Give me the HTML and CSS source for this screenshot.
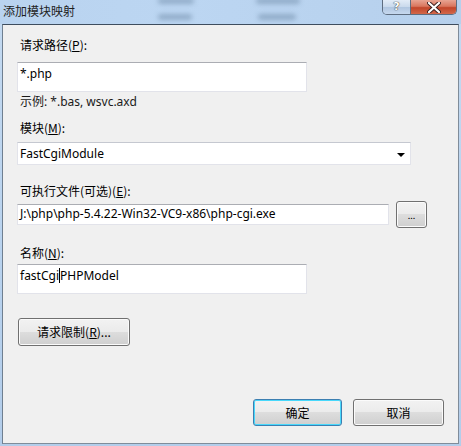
FILE: index.html
```html
<!DOCTYPE html>
<html lang="zh-CN">
<head>
  <meta charset="UTF-8" />
  <title>添加模块映射</title>
  <link rel="stylesheet" href="styles.css">
</head>
<body>
  <div class="window">
    <div class="titlebar">
      <span class="blob b1"></span>
      <span class="blob b2"></span>
      <span class="blob b3"></span>
      <span class="blob b4"></span>
      <span class="title">添加模块映射</span>
      <div class="caption-buttons">
        <span class="cap-help">?</span>
        <span class="cap-close">
          <svg width="14" height="11" viewBox="0 0 14 11">
            <path d="M2 1 L12 10 M12 1 L2 10" stroke="#3a2020" stroke-width="4" stroke-linecap="round"/>
            <path d="M2 1 L12 10 M12 1 L2 10" stroke="#ffffff" stroke-width="2.2" stroke-linecap="round"/>
          </svg>
        </span>
      </div>
    </div>

    <div class="client">
      <label class="field-label path-label">请求路径(<u>P</u>):</label>
      <div class="textbox tall w-short first-box">*.php</div>
      <div class="hint">示例: *.bas, wsvc.axd</div>

      <label class="field-label module-label">模块(<u>M</u>):</label>
      <div class="combo">
        <span>FastCgiModule</span>
        <span class="arrow"></span>
      </div>

      <label class="field-label exe-label">可执行文件(可选)(<u>E</u>):</label>
      <div class="path-row">
        <div class="textbox path">J:\php\php-5.4.22-Win32-VC9-x86\php-cgi.exe</div>
        <button class="btn browse">...</button>
      </div>

      <label class="field-label name-label">名称(<u>N</u>):</label>
      <div class="textbox tall w-short name-box">fastCgi<span class="caret"></span>PHPModel</div>

      <button class="btn restrict">请求限制(<u>R</u>)...</button>

      <div class="dialog-buttons">
        <button class="btn default">确定</button>
        <button class="btn cancel">取消</button>
      </div>
    </div>
  </div>
</body>
</html>
```

FILE: styles.css
```css
* {
  margin: 0;
  padding: 0;
  box-sizing: border-box;
}

body {
  font-family: "Noto Sans", "Noto Sans CJK SC", sans-serif;
  font-size: 12px;
  color: #000;
  background: #fff;
}

.window {
  width: 461px;
  height: 446px;
  background: linear-gradient(180deg, #c4daf1 0%, #b8d2ee 60%, #b3cdea 100%);
  display: flex;
  flex-direction: column;
  overflow: hidden;
}

/* title bar */
.titlebar {
  position: relative;
  height: 24px;
  display: flex;
  align-items: flex-start;
  background: linear-gradient(90deg, #b9d3ef 0%, #bcd6f2 40%, #b6d0ec 100%);
}

.blob {
  position: absolute;
  height: 6px;
  border-radius: 3px;
  background: #6d89a6;
  filter: blur(2.5px);
  opacity: 0.55;
}
.b1 { left: 158px; top: -2px; width: 36px; }
.b2 { left: 158px; top: 14px; width: 34px; }
.b3 { left: 256px; top: -2px; width: 44px; }
.b4 { left: 258px; top: 14px; width: 38px; }

.title {
  position: relative;
  margin: 3px 0 0 3px;
  font-family: "Noto Sans CJK SC", sans-serif;
  font-size: 12px;
  line-height: 16px;
  color: #1e1e1e;
}

.caption-buttons {
  position: relative;
  margin-left: auto;
  margin-right: 4px;
  display: flex;
  height: 15px;
  border: 1px solid #5e6d80;
  border-top: none;
  border-radius: 0 0 5px 5px;
  overflow: hidden;
}

.cap-help {
  width: 28px;
  height: 14px;
  background: linear-gradient(180deg, #e2ecf7 0%, #c9d9ec 50%, #b0c6e0 51%, #c6d8ee 100%);
  border-right: 1px solid #5e6d80;
  color: #fff;
  font-family: "DejaVu Sans", sans-serif;
  font-weight: bold;
  font-size: 11px;
  line-height: 14px;
  text-align: center;
  text-shadow: 0 0 1px #333, 0 0 1px #333;
}

.cap-close {
  width: 45px;
  height: 14px;
  display: flex;
  align-items: center;
  justify-content: center;
  background: linear-gradient(180deg, #e8a493 0%, #d9765e 45%, #c2452a 55%, #d2684a 100%);
}

/* client area */
.client {
  margin: 0 2px;
  height: 420px;
  background: #f0f0f0;
  border: 1px solid #4a5a6c;
  border-color: #3e4d5e #7f8c9a #7f8c9a #6f7f90;
  padding: 0 0 0 14px;
  display: flex;
  flex-direction: column;
  align-items: flex-start;
}

.field-label {
  display: block;
  margin-left: 3px;
  line-height: 16px;
  font-family: "Noto Sans CJK SC", sans-serif;
}

.field-label u,
.btn u {
  text-underline-offset: 1px;
}

.path-label   { margin-top: 12px; }
.first-box    { margin-top: 9px; }
.module-label { margin-top: 10px; }
.exe-label    { margin-top: 18px; }
.name-label   { margin-top: 17px; }
.name-box     { margin-top: 3px; }

.textbox {
  background: #fff;
  border: 1px solid #e2e3ea;
  border-top-color: #abadb3;
  padding: 3px 2px;
  line-height: 16px;
  white-space: nowrap;
}

.textbox.tall {
  height: 30px;
}

.w-short {
  width: 290px;
}

.hint {
  margin: 2px 0 0 3px;
  line-height: 16px;
  color: #1a1a1a;
}

.combo {
  margin-top: 6px;
  width: 394px;
  height: 23px;
  background: #fff;
  border: 1px solid #e2e3ea;
  border-top-color: #c5c8d0;
  display: flex;
  align-items: center;
  justify-content: space-between;
  padding: 0 5px 0 2px;
}

.arrow {
  width: 0;
  height: 0;
  border-left: 4px solid transparent;
  border-right: 4px solid transparent;
  border-top: 4px solid #000;
  margin-top: 2px;
}

.path-row {
  margin-top: 2px;
  display: flex;
  align-items: center;
  gap: 7px;
}

.textbox.path {
  width: 372px;
  height: 21px;
  padding: 1px 2px;
}

.btn {
  font-family: "Noto Sans CJK SC", sans-serif;
  font-size: 12px;
  color: #000;
  border: 1px solid #707070;
  border-radius: 3px;
  background: linear-gradient(180deg, #f2f2f2 0%, #ebebeb 49%, #dddddd 50%, #cfcfcf 100%);
  box-shadow: inset 0 0 0 1px #fbfbfb;
  line-height: 16px;
}

.btn.browse {
  width: 31px;
  height: 27px;
  font-size: 9px;
  padding-top: 2px;
}

.caret {
  display: inline-block;
  width: 1px;
  height: 15px;
  background: #000;
  vertical-align: -3px;
}

.btn.restrict {
  margin: 24px 0 0 1px;
  width: 112px;
  height: 28px;
}

.dialog-buttons {
  margin-top: 53px;
  align-self: flex-end;
  margin-right: 14px;
  display: flex;
  gap: 11px;
}

.dialog-buttons .btn {
  height: 27px;
}

.btn.default {
  width: 89px;
  border-color: #3c7fb1;
  box-shadow: inset 0 0 0 1px #48d8fb;
}

.btn.cancel {
  width: 91px;
}
```
